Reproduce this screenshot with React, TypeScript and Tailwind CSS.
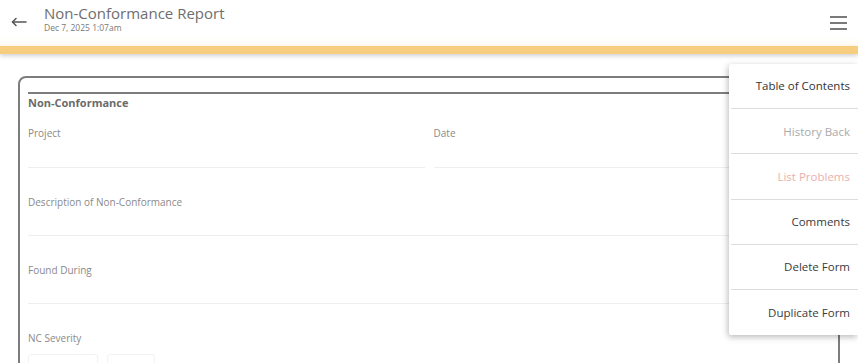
import React from "react";

const font = { fontFamily: '"Open Sans", "Noto Sans", sans-serif' };

function Field({ label, first }: { label: string; first?: boolean }) {
  return (
    <div className={first ? "pt-[14px] border-b border-[#eeeeee]" : "pt-[27px] border-b border-[#eeeeee]"}>
      <div className="h-[14px] leading-[14px] text-[10px] text-[#8a8a8a]">{label}</div>
      <div className={first ? "h-[27px]" : "h-[26px]"} />
    </div>
  );
}

const items: { label: string; color: string }[] = [
  { label: "Table of Contents", color: "text-[#333333]" },
  { label: "History Back", color: "text-[#aaaaaa]" },
  { label: "List Problems", color: "text-[#e8b0b0]" },
  { label: "Comments", color: "text-[#3a3a3a]" },
  { label: "Delete Form", color: "text-[#3a3a3a]" },
  { label: "Duplicate Form", color: "text-[#3a3a3a]" },
];

export default function App() {
  return (
    <div className="relative w-[858px] h-[363px] overflow-hidden bg-white" style={font}>
      {/* Header */}
      <div className="h-[46px] flex items-start bg-gradient-to-b from-white from-80% to-[#fffbf1]">
        <div className="w-[44px] h-[44px] flex items-center justify-start pl-[11px]">
          <svg width="16" height="12" viewBox="0 0 16 12" fill="none" stroke="#555" strokeWidth="1.5" strokeLinecap="round" strokeLinejoin="round">
            <path d="M15 6H1.5" />
            <path d="M5 2.5L1.5 6l3.5 3.5" />
          </svg>
        </div>
        <div className="pt-[3px] flex flex-col">
          <div className="text-[15px] leading-[20px] text-[#6e6e6e]">Non-Conformance Report</div>
          <div className="text-[8.5px] leading-[11px] text-[#7a7a7a] -mt-[1px]">Dec 7, 2025 1:07am</div>
        </div>
        <div className="ml-auto mr-[11px] mt-[16px] flex flex-col gap-[4px]">
          <div className="w-[17px] h-[2px] bg-[#7a7a7a]" />
          <div className="w-[17px] h-[2px] bg-[#7a7a7a]" />
          <div className="w-[17px] h-[2px] bg-[#7a7a7a]" />
        </div>
      </div>
      {/* Yellow bar */}
      <div className="h-[8px] bg-[#f7cd7f] shadow-[0_2px_4px_rgba(0,0,0,0.18)]" />

      {/* Card */}
      <div className="mt-[22px] ml-[18px] w-[822px] h-[300px] border-2 border-[#7d7d7d] rounded-tl-[8px] rounded-tr-[8px] px-[8px] pt-[14px]">
        <div className="border-t-2 border-[#7d7d7d]">
          <div className="h-[18px] leading-[18px] text-[11px] font-bold text-[#6a6a6a]">Non-Conformance</div>
          <div className="grid grid-cols-2 gap-x-[9px]">
            <Field label="Project" first />
            <Field label="Date" first />
          </div>
          <Field label="Description of Non-Conformance" />
          <Field label="Found During" />
          <div className="pt-[27px]">
            <div className="h-[14px] leading-[14px] text-[10px] text-[#8a8a8a]">NC Severity</div>
            <div className="mt-[9px] flex gap-[9px]">
              <div className="w-[70px] h-[20px] border border-[#f2f2f2] rounded-t-[3px]" />
              <div className="w-[48px] h-[20px] border border-[#f2f2f2] rounded-t-[3px]" />
            </div>
          </div>
        </div>
      </div>

      {/* Dropdown menu */}
      <div className="absolute left-[729px] top-[64px] w-[129px] h-[271px] bg-white rounded-tl-[3px] rounded-bl-[2px] shadow-[-1px_2px_6px_rgba(0,0,0,0.28)] flex flex-col">
        {items.map((it, i) => (
          <div
            key={it.label}
            className={
              "h-[45.2px] flex items-center justify-end pr-[8px] ml-[2px] text-[11.5px] " +
              it.color +
              (i < items.length - 1 ? " border-b border-[#dddddd]" : "")
            }
          >
            {it.label}
          </div>
        ))}
      </div>
    </div>
  );
}
